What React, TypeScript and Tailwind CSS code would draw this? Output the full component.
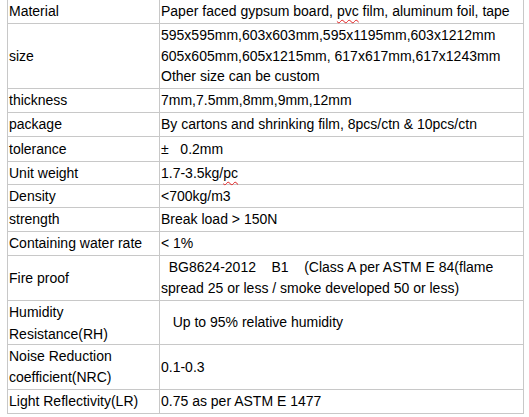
import React from 'react';

interface SpecRow {
  label: React.ReactNode;
  value: React.ReactNode;
  height: string;
}

const Squiggle: React.FC<{ children: React.ReactNode }> = ({ children }) => (
  <span className="underline decoration-wavy decoration-[#e02020] decoration-1 underline-offset-[3px]">{children}</span>
);

const rows: SpecRow[] = [
  {
    label: 'Material',
    value: (
      <span>
        Paper faced gypsum board, <Squiggle>pvc</Squiggle> film, aluminum foil, tape
      </span>
    ),
    height: 'h-[24px]',
  },
  {
    label: 'size',
    value: (
      <div className="leading-[20.5px]">
        <div>595x595mm,603x603mm,595x1195mm,603x1212mm</div>
        <div>605x605mm,605x1215mm, 617x617mm,617x1243mm</div>
        <div>Other size can be custom</div>
      </div>
    ),
    height: 'h-[65px]',
  },
  { label: 'thickness', value: '7mm,7.5mm,8mm,9mm,12mm', height: 'h-[24px]' },
  { label: 'package', value: 'By cartons and shrinking film, 8pcs/ctn & 10pcs/ctn', height: 'h-[24px]' },
  { label: 'tolerance', value: <span className="whitespace-pre">{'±   0.2mm'}</span>, height: 'h-[25px]' },
  {
    label: 'Unit weight',
    value: (
      <span>
        1.7-3.5kg/<Squiggle>pc</Squiggle>
      </span>
    ),
    height: 'h-[23px]',
  },
  { label: 'Density', value: '<700kg/m3', height: 'h-[23px]' },
  { label: 'strength', value: 'Break load > 150N', height: 'h-[24px]' },
  { label: 'Containing water rate', value: '< 1%', height: 'h-[24px]' },
  {
    label: 'Fire proof',
    value: (
      <div className="leading-[21px] whitespace-pre">
        <div>{'  BG8624-2012    B1    (Class A per ASTM E 84(flame'}</div>
        <div>spread 25 or less / smoke developed 50 or less)</div>
      </div>
    ),
    height: 'h-[45px]',
  },
  {
    label: (
      <div className="leading-[22px]">
        <div>Humidity</div>
        <div>Resistance(RH)</div>
      </div>
    ),
    value: <span className="whitespace-pre">{'   Up to 95% relative humidity'}</span>,
    height: 'h-[44px]',
  },
  {
    label: (
      <div className="leading-[21px]">
        <div>Noise Reduction</div>
        <div>coefficient(NRC)</div>
      </div>
    ),
    value: '0.1-0.3',
    height: 'h-[45px]',
  },
  { label: 'Light Reflectivity(LR)', value: '0.75 as per ASTM E 1477', height: 'h-[24px]' },
];

const App: React.FC = () => {
  return (
    <div className="min-h-screen bg-white font-['Liberation_Sans',Arial,sans-serif] text-[14px] text-black">
      <div className="ml-[7px] w-[517px] border-l border-r border-[#c8c8c8]">
        {rows.map((row, i) => (
          <div key={i} className={`flex border-b border-[#c8c8c8] ${row.height}`}>
            <div className="w-[152px] flex-shrink-0 border-r border-[#c8c8c8] pl-px flex items-center">
              {row.label}
            </div>
            <div className="flex-1 pl-px flex items-center">{row.value}</div>
          </div>
        ))}
      </div>
    </div>
  );
};

export default App;
